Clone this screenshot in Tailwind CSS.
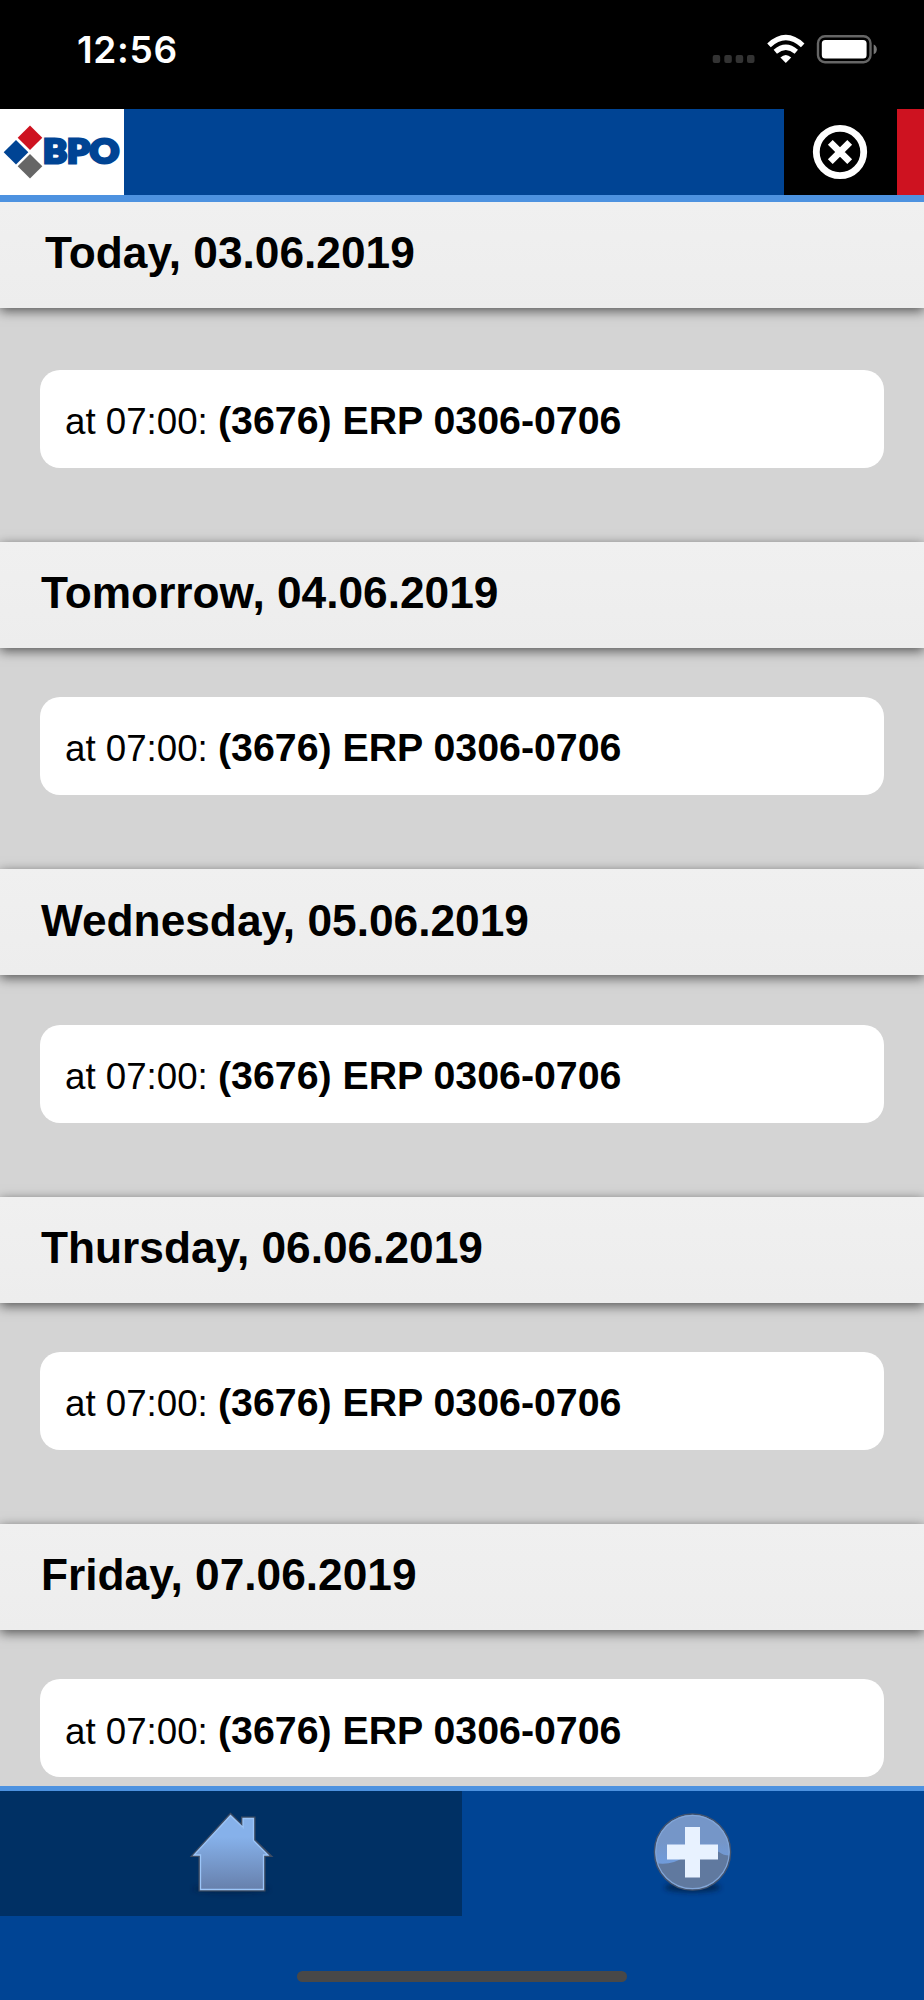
<!DOCTYPE html>
<html lang="en"><head><meta charset="utf-8"><title>BPO Calendar</title>
<script src="https://cdn.jsdelivr.net/npm/@tailwindcss/browser@4"></script></head>
<body class="w-[924px] h-[2000px] overflow-hidden bg-[#d4d4d4] text-black font-['Liberation_Sans',Arial,sans-serif]">
<div class="flex flex-col h-[2000px]">
<div class="h-[108.5px] shrink-0 bg-black flex items-start justify-between">
  <div class="pl-[77px] pt-[30px] text-[37px] leading-[40px] tracking-[0.7px] font-semibold text-white font-['Inter',sans-serif]">12:56</div>
  <svg class="mt-[20px] mr-[34px]" width="190" height="60" viewBox="0 0 190 60">
    <g fill="#333"><rect x="12.7" y="35" width="7.5" height="8" rx="2"/><rect x="24.3" y="35" width="7.5" height="8" rx="2"/><rect x="35.7" y="35" width="7.5" height="8" rx="2"/><rect x="47" y="35" width="7.5" height="8" rx="2"/></g>
    <g fill="none" stroke="#fff" stroke-width="5.2"><path d="M69 25.4Q85.8 9.800 102.700 25.400"/><path d="M75.300 31.700Q85.800 22.800 96.300 31.700"/></g><path d="M80.400 37.600Q85.800 32.600 91.200 37.600L85.800 43Z" fill="#fff"/>
    <rect x="118" y="16.200" width="52.500" height="26" rx="7" fill="none" stroke="#666" stroke-width="2.400"/><rect x="121.800" y="20" width="44.800" height="18.500" rx="3.500" fill="#fff"/><path d="M173.700 24.500Q176.800 26 176.800 29.400T173.700 34.300Z" fill="#777"/>
  </svg>
</div>
<header class="h-[93px] shrink-0 flex bg-[#004494] border-b-[7px] border-[#4d92e0]">
  <div class="w-[124px] bg-white">
    <svg width="124" height="86" viewBox="0 0 124 86"><path d="M30 16.500L42.300 28.800L30 41L17.700 28.800Z" fill="#ce1220"/><path d="M16 31L28.300 43.200L16 55.400L3.700 43.200Z" fill="#004494"/><path d="M30 45L42.300 57.200L30 69.400L17.700 57.200Z" fill="#666"/>
    <text x="43" y="54.200" textLength="76" lengthAdjust="spacingAndGlyphs" font-family="Lato" font-weight="900" font-size="31.500" fill="#004494" stroke="#004494" stroke-width="3">BPO</text></svg>
  </div>
  <div class="flex-1"></div>
  <div class="w-[113px] bg-black flex items-center justify-center"><svg width="56" height="56" viewBox="0 0 56 56" fill="none" stroke="#fff"><circle cx="28" cy="28" r="23.700" stroke-width="6.800"/><path d="M18.300 18.300L37.700 37.700M37.700 18.300L18.300 37.700" stroke-width="6.800"/></svg></div>
  <div class="w-[27.500px] bg-[#ce1220]"></div>
</header>
<main class="h-[1584px] shrink-0 overflow-hidden">
  <section class="h-[340.300px]"><h2 class="h-[106px] flex items-center pl-[45px] pb-[3px] text-[44.250px] font-bold bg-linear-to-b from-[#f0f0f0] to-[#ededed] shadow-[0_3px_11px_rgba(0,0,0,.6)]">Today, 03.06.2019</h2><div class="mt-[62px] mx-10 h-[98px] rounded-[20px] bg-white flex items-center pl-[25px] pt-[3px] text-[36.700px]"><p>at 07:00: <b class="text-[39.300px]">(3676) ERP 0306-0706</b></p></div></section>
  <section class="h-[327.400px]"><h2 class="h-[106px] flex items-center pl-[41px] pb-[4px] text-[44.250px] font-bold bg-linear-to-b from-[#f0f0f0] to-[#ededed] shadow-[0_3px_11px_rgba(0,0,0,.6)]">Tomorrow, 04.06.2019</h2><div class="mt-[49.500px] mx-10 h-[98px] rounded-[20px] bg-white flex items-center pl-[25px] pt-[3px] text-[36.700px]"><p>at 07:00: <b class="text-[39.300px]">(3676) ERP 0306-0706</b></p></div></section>
  <section class="h-[327.400px]"><h2 class="h-[106px] flex items-center pl-[41px] pb-[3px] text-[44.250px] font-bold bg-linear-to-b from-[#f0f0f0] to-[#ededed] shadow-[0_3px_11px_rgba(0,0,0,.6)]">Wednesday, 05.06.2019</h2><div class="mt-[49.500px] mx-10 h-[98px] rounded-[20px] bg-white flex items-center pl-[25px] pt-[3px] text-[36.700px]"><p>at 07:00: <b class="text-[39.300px]">(3676) ERP 0306-0706</b></p></div></section>
  <section class="h-[327.400px]"><h2 class="h-[106px] flex items-center pl-[41px] pb-[3px] text-[44.250px] font-bold bg-linear-to-b from-[#f0f0f0] to-[#ededed] shadow-[0_3px_11px_rgba(0,0,0,.6)]">Thursday, 06.06.2019</h2><div class="mt-[49.500px] mx-10 h-[98px] rounded-[20px] bg-white flex items-center pl-[25px] pt-[3px] text-[36.700px]"><p>at 07:00: <b class="text-[39.300px]">(3676) ERP 0306-0706</b></p></div></section>
  <section class="h-[327.400px]"><h2 class="h-[106px] flex items-center pl-[41px] pb-[3px] text-[44.250px] font-bold bg-linear-to-b from-[#f0f0f0] to-[#ededed] shadow-[0_3px_11px_rgba(0,0,0,.6)]">Friday, 07.06.2019</h2><div class="mt-[49.500px] mx-10 h-[98px] rounded-[20px] bg-white flex items-center pl-[25px] pt-[3px] text-[36.700px]"><p>at 07:00: <b class="text-[39.300px]">(3676) ERP 0306-0706</b></p></div></section>
</main>
<footer class="flex-1 bg-[#004494] border-t-[5px] border-[#4d92e0] flex flex-col items-center">
  <nav class="w-full h-[125.500px] flex">
    <div class="w-1/2 bg-[#003064] flex justify-center pt-[18px]"><svg width="92" height="92" viewBox="0 0 92 92"><defs><linearGradient id="h" x2="0" y2="1"><stop offset=".3" stop-color="#86b1ea"/><stop offset="1" stop-color="#667fab"/></linearGradient><filter id="s" x="-20%" y="-100%" width="140%" height="300%"><feGaussianBlur stdDeviation="2.500"/></filter></defs>
      <ellipse cx="46" cy="80" rx="38" ry="4" fill="#001a3c" opacity=".6" filter="url(#s)"/>
      <path d="M45.500 5L57 16.500V8.500H69.500V31L86 47H79.500V81.500H14.500V47H7Z" fill="url(#h)" stroke="#3e4c63" stroke-width="2"/><path d="M45.500 6.500L58 18.500V9.500H68.500V31.500L83 46H78.500V80.500H15.500V46H9Z" fill="none" stroke="#9cc5f8" stroke-width="1.300"/></svg></div>
    <div class="w-1/2 flex justify-center pt-[18px]"><svg width="92" height="92" viewBox="0 0 92 92"><ellipse cx="45.500" cy="78.500" rx="28" ry="5" fill="#001a3c" opacity=".7" filter="url(#s)"/><clipPath id="c"><circle cx="45.500" cy="43" r="37"/></clipPath><circle cx="45.500" cy="43" r="38" fill="#60799f" stroke="#41536f" stroke-width="1.600"/><linearGradient id="p" x2="0" y2="1"><stop stop-color="#7596c8"/><stop offset=".6" stop-color="#7596c8"/><stop offset="1" stop-color="#709cdc"/></linearGradient><path clip-path="url(#c)" d="M5 0H90V45Q80 49 72 43C60 36 49 40 37 48Q24 57 8 54Z" fill="url(#p)"/><circle cx="45.500" cy="43" r="36.700" fill="none" stroke="#82a6d8" stroke-width="1.200"/><path d="M38 18H53V35.500H71V50.500H53V68.500H38V50.500H20V35.500H38Z" fill="#e8f2ff"/></svg></div>
  </nav>
  <div class="mt-[55px] w-[330px] h-[11px] rounded-full bg-[#484848]"></div>
</footer>
</div>
</body></html>
